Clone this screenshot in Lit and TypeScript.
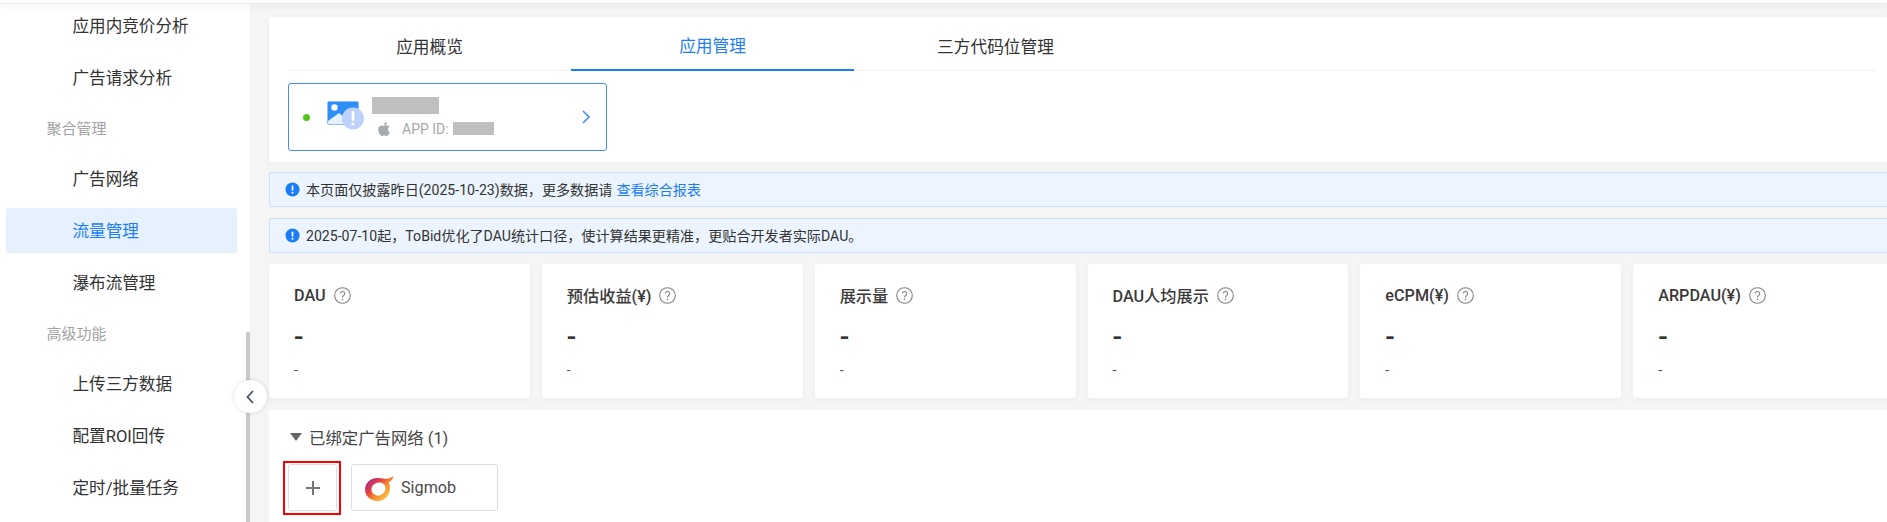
import { LitElement, html, css } from "lit";
import { customElement } from "lit/decorators.js";

const C = "\uFF0C";
const help = html`<svg class="help" viewBox="0 0 17 17" fill="none"><circle cx="8.5" cy="8.5" r="7.8" stroke="#7f848d" stroke-width="1.1"/><path d="M6.300 6.600a2.200 2.200 0 1 1 3.400 1.900c-.8.5-1.200.9-1.200 1.900" stroke="#7f848d" stroke-width="1.100"/><circle cx="8.500" cy="12.400" r=".8" fill="#7f848d"/></svg>`;
const info = html`<svg class="info" viewBox="0 0 16 16"><circle cx="8" cy="8" r="7.500" fill="#1d7df7"/><rect x="7.100" y="3.600" width="1.800" height="5.800" rx=".8" fill="#fff"/><circle cx="8" cy="11.400" r="1.100" fill="#fff"/></svg>`;

type Row = { t: string; label?: boolean; active?: boolean };
const nav: Row[] = [
  { t: "应用内竞价分析" },
  { t: "广告请求分析" },
  { t: "聚合管理", label: true },
  { t: "广告网络" },
  { t: "流量管理", active: true },
  { t: "瀑布流管理" },
  { t: "高级功能", label: true },
  { t: "上传三方数据" },
  { t: "配置ROI回传" },
  { t: "定时/批量任务" },
];
const kpis = ["DAU", "预估收益(¥)", "展示量", "DAU人均展示", "eCPM(¥)", "ARPDAU(¥)"];

@customElement("app-root")
export class AppRoot extends LitElement {
  static styles = css`
    :host {
      display: block;
      width: 1887px;
      height: 522px;
      overflow: hidden;
      background: #f5f5f5;
      color: #333;
      font-family: "Roboto", "Noto Sans CJK SC", sans-serif;
    }
    .top {
      height: 4px;
      background: #fff;
      border-bottom: 1px solid #e4e8ef;
      box-sizing: border-box;
      box-shadow: 0 2px 6px rgba(0, 0, 0, 0.06);
      position: relative;
      z-index: 3;
    }
    .layout {
      display: flex;
      height: 518px;
    }
    .side {
      position: relative;
      flex: 0 0 250px;
      background: #fff;
      z-index: 2;
    }
    .nav {
      height: 100%;
      overflow: hidden;
      margin-top: -1px;
    }
    .item {
      height: 45px;
      box-sizing: border-box;
      margin: 0 13px 7px 6px;
      padding: 0 0 2px 66.500px;
      display: flex;
      align-items: center;
      font-size: 16.600px;
      border-radius: 3px;
      color: #333;
    }
    .item.active {
      background: #e6f1fe;
      color: #1d7df7;
    }
    .group {
      height: 56px;
      box-sizing: border-box;
      margin-top: -7px;
      padding: 0 0 2px 46.500px;
      display: flex;
      align-items: center;
      font-size: 15px;
      color: #a3a3a3;
    }
    .thumb {
      position: absolute;
      right: 0;
      top: 328px;
      bottom: 0;
      width: 4px;
      background: #c9c9c9;
    }
    .collapse {
      position: absolute;
      left: 233.500px;
      top: 376px;
      width: 33px;
      height: 33px;
      border-radius: 50%;
      background: #fff;
      box-shadow: 0 0 4px rgba(0, 0, 0, 0.14);
      display: flex;
      align-items: center;
      justify-content: center;
    }
    .collapse svg {
      width: 10px;
      height: 16px;
    }
    .main {
      flex: 0 0 1625px;
      margin-left: 19px;
      padding-top: 13px;
    }
    .panel {
      background: #fff;
      height: 145px;
      padding: 0 19px;
      box-sizing: border-box;
      box-shadow: 0 1px 6px rgba(0, 0, 0, 0.05);
    }
    .tabs {
      display: flex;
      height: 54px;
      box-sizing: border-box;
      border-bottom: 1px solid #eef0f6;
    }
    .tab {
      flex: 0 0 283px;
      height: 54px;
      box-sizing: border-box;
      padding-top: 4px;
      display: flex;
      align-items: center;
      justify-content: center;
      font-size: 16.700px;
    }
    .tab.on {
      color: #1d7df7;
      border-bottom: 2px solid #1d7df7;
    }
    .app {
      margin-top: 12px;
      width: 319px;
      height: 68px;
      box-sizing: border-box;
      border: 1px solid #3f8ff5;
      border-radius: 3px;
      display: flex;
      align-items: center;
    }
    .dot {
      width: 7px;
      height: 7px;
      border-radius: 50%;
      background: #52c41a;
      margin-left: 14px;
    }
    .thumbnail {
      width: 38px;
      height: 30px;
      margin-left: 17px;
      margin-top: -3px;
    }
    .meta {
      margin-left: 7px;
      display: flex;
      flex-direction: column;
      margin-top: -1px;
    }
    .mask {
      background: #bfbfbf;
    }
    .name {
      width: 67px;
      height: 17px;
    }
    .id {
      margin-top: 7px;
      display: flex;
      align-items: center;
      height: 15px;
      font-size: 14px;
      color: #a8a8a8;
    }
    .apple {
      width: 14px;
      height: 16px;
      margin: 0 11px 0 5px;
    }
    .idv {
      width: 41px;
      height: 13px;
      margin-left: 4px;
    }
    .arrow {
      margin-left: auto;
      margin-right: 15px;
      width: 10px;
      height: 14px;
    }
    .alert {
      margin-top: 11px;
      height: 35px;
      box-sizing: border-box;
      background: #ecf5ff;
      border: 1px solid #c6e0fb;
      border-radius: 2px;
      display: flex;
      align-items: center;
      padding-left: 15px;
      font-size: 14.100px;
    }
    .panel + .alert {
      margin-top: 10px;
    }
    .alert span {
      margin-top: -2px;
    }
    .alert a {
      color: #1d7df7;
      margin: -2px 0 0 4px;
    }
    .info {
      width: 15px;
      height: 15px;
      margin-right: 6px;
    }
    .kpis {
      display: grid;
      grid-template-columns: repeat(6, 1fr);
      gap: 12px;
      margin-top: 11px;
    }
    .kpi {
      background: #fff;
      height: 134px;
      border-radius: 3px;
      padding: 21px 25px 0;
      box-sizing: border-box;
      box-shadow: 0 2px 6px rgba(0, 0, 0, 0.04);
    }
    .kt {
      display: flex;
      align-items: center;
      gap: 8px;
      height: 20px;
      font-size: 16.200px;
      font-weight: 500;
      color: #3a3a3a;
    }
    .help {
      width: 17px;
      height: 17px;
    }
    .kv {
      margin-top: 19px;
      height: 26px;
      font-size: 28px;
      line-height: 26px;
      font-weight: 500;
      color: #333;
    }
    .ks {
      margin-top: 11px;
      font-size: 14px;
      line-height: 18px;
      color: #555;
    }
    .bound {
      margin-top: 12px;
      background: #fff;
      height: 112px;
      padding: 17px 19px 0;
      box-sizing: border-box;
    }
    .bh {
      display: flex;
      align-items: center;
      height: 20px;
      font-size: 16.400px;
      color: #444;
      padding-left: 2px;
    }
    .tri {
      width: 0;
      height: 0;
      border: 6px solid transparent;
      border-top: 8px solid #666;
      border-bottom: 0;
      margin-right: 7px;
    }
    .nets {
      display: flex;
      gap: 14px;
      margin-top: 17px;
    }
    .net {
      height: 47px;
      box-sizing: border-box;
      border: 1px solid #dedede;
      border-radius: 3px;
      display: flex;
      align-items: center;
    }
    .mark {
      margin: -3px -4px -4px -5px;
      padding: 1px 2px 2px 3px;
      border: 2px solid #f00;
    }
    .add {
      width: 49px;
      justify-content: center;
    }
    .add svg {
      width: 14px;
      height: 14px;
    }
    .sig {
      width: 147px;
      padding-left: 12px;
      font-size: 16.200px;
      color: #4a4a4a;
    }
    .sig svg {
      width: 30px;
      height: 26px;
      margin-right: 7px;
    }
  `;

  render() {
    return html`
      <div class="top"></div>
      <div class="layout">
        <aside class="side">
          <nav class="nav">
            ${nav.map((n) =>
              n.label
                ? html`<div class="group">${n.t}</div>`
                : html`<div class="item ${n.active ? "active" : ""}">${n.t}</div>`
            )}
          </nav>
          <div class="thumb"></div>
          <div class="collapse">
            <svg viewBox="0 0 10 16" fill="none"><path d="M8 2L2.500 8 8 14" stroke="#4a5260" stroke-width="1.800"/></svg>
          </div>
        </aside>
        <main class="main">
          <section class="panel">
            <div class="tabs">
              <div class="tab">应用概览</div>
              <div class="tab on">应用管理</div>
              <div class="tab">三方代码位管理</div>
            </div>
            <div class="app">
              <span class="dot"></span>
              <svg class="thumbnail" viewBox="0 0 38 30">
                <rect x="0.500" y="0.500" width="31" height="23" rx="1.500" fill="#e6f1fe" stroke="#8fc0fb"/>
                <path d="M1 1h30v12l-6-4-8 7-5-4-11 8z" fill="#2e8ef7"/>
                <circle cx="7.500" cy="6.500" r="3.200" fill="#fff"/>
                <circle cx="26" cy="17.500" r="11" fill="#bcd2fa"/>
                <rect x="24.700" y="10" width="2.600" height="10" rx="1.200" fill="#fff"/>
                <circle cx="26" cy="23" r="1.500" fill="#fff"/>
              </svg>
              <div class="meta">
                <div class="mask name"></div>
                <div class="id">
                  <svg class="apple" viewBox="0 0 384 512"><path fill="#a8abb0" d="M318.7 268.7c-.2-36.7 16.4-64.4 50-84.8-18.8-26.9-47.2-41.7-84.7-44.6-35.5-2.8-74.3 20.7-88.5 20.7-15 0-49.4-19.7-76.4-19.7C63.3 141.2 4 184.8 4 273.5q0 39.3 14.4 81.2c12.8 36.7 59 126.7 107.2 125.2 25.2-.6 43-17.9 75.8-17.9 31.8 0 48.3 17.9 76.4 17.9 48.6-.7 90.4-82.5 102.6-119.3-65.2-30.7-61.7-90-61.7-91.9zm-56.6-164.2c27.3-32.4 24.8-61.9 24-72.5-24.1 1.4-52 16.4-67.9 34.9-17.5 19.8-27.8 44.3-25.6 71.9 26.1 2 49.9-11.4 69.5-34.3z"/></svg>
                  APP ID:<span class="mask idv"></span>
                </div>
              </div>
              <svg class="arrow" viewBox="0 0 10 14" fill="none"><path d="M2 1l6 6-6 6" stroke="#3f8ff5" stroke-width="1.600"/></svg>
            </div>
          </section>
          <div class="alert">${info}<span>本页面仅披露昨日(2025-10-23)数据${C}更多数据请</span><a>查看综合报表</a></div>
          <div class="alert">${info}<span>2025-07-10起${C}ToBid优化了DAU统计口径${C}使计算结果更精准${C}更贴合开发者实际DAU。</span></div>
          <div class="kpis">
            ${kpis.map(
              (k) => html`<div class="kpi">
                <div class="kt"><span>${k}</span>${help}</div>
                <div class="kv">-</div>
                <div class="ks">-</div>
              </div>`
            )}
          </div>
          <section class="bound">
            <div class="bh"><span class="tri"></span>已绑定广告网络 (1)</div>
            <div class="nets">
              <div class="mark">
                <div class="net add">
                  <svg viewBox="0 0 14 14"><path d="M7 0v14M0 7h14" stroke="#777" stroke-width="2"/></svg>
                </div>
              </div>
              <div class="net sig">
                <svg viewBox="0 0 30 26">
                  <defs>
                    <linearGradient id="sg" x1="0.050" y1="0.200" x2="0.800" y2="0.850">
                      <stop offset="0" stop-color="#a02a96"/>
                      <stop offset="0.350" stop-color="#e8403f"/>
                      <stop offset="0.650" stop-color="#f78d2a"/>
                      <stop offset="1" stop-color="#fcc24a"/>
                    </linearGradient>
                  </defs>
                  <path fill="url(#sg)" fill-rule="evenodd" d="M13 3C6 3 1 8.500 1 14.500 1 21 6.500 26 13.500 26 21 26 26 20 26 13c0-2-.5-4-1.500-5.500C27 6.500 29 4 29.500 1 27 3 24 4 21 4c-2-.7-5-1-8-1zM15.500 7.500c-4.500 0-8 3-8 7 0 3.500 2.800 6 6.300 6 4.200 0 7.700-3.300 7.700-7.300 0-3.400-2.600-5.700-6-5.700z"/>
                </svg>
                Sigmob
              </div>
            </div>
          </section>
        </main>
      </div>
    `;
  }
}
